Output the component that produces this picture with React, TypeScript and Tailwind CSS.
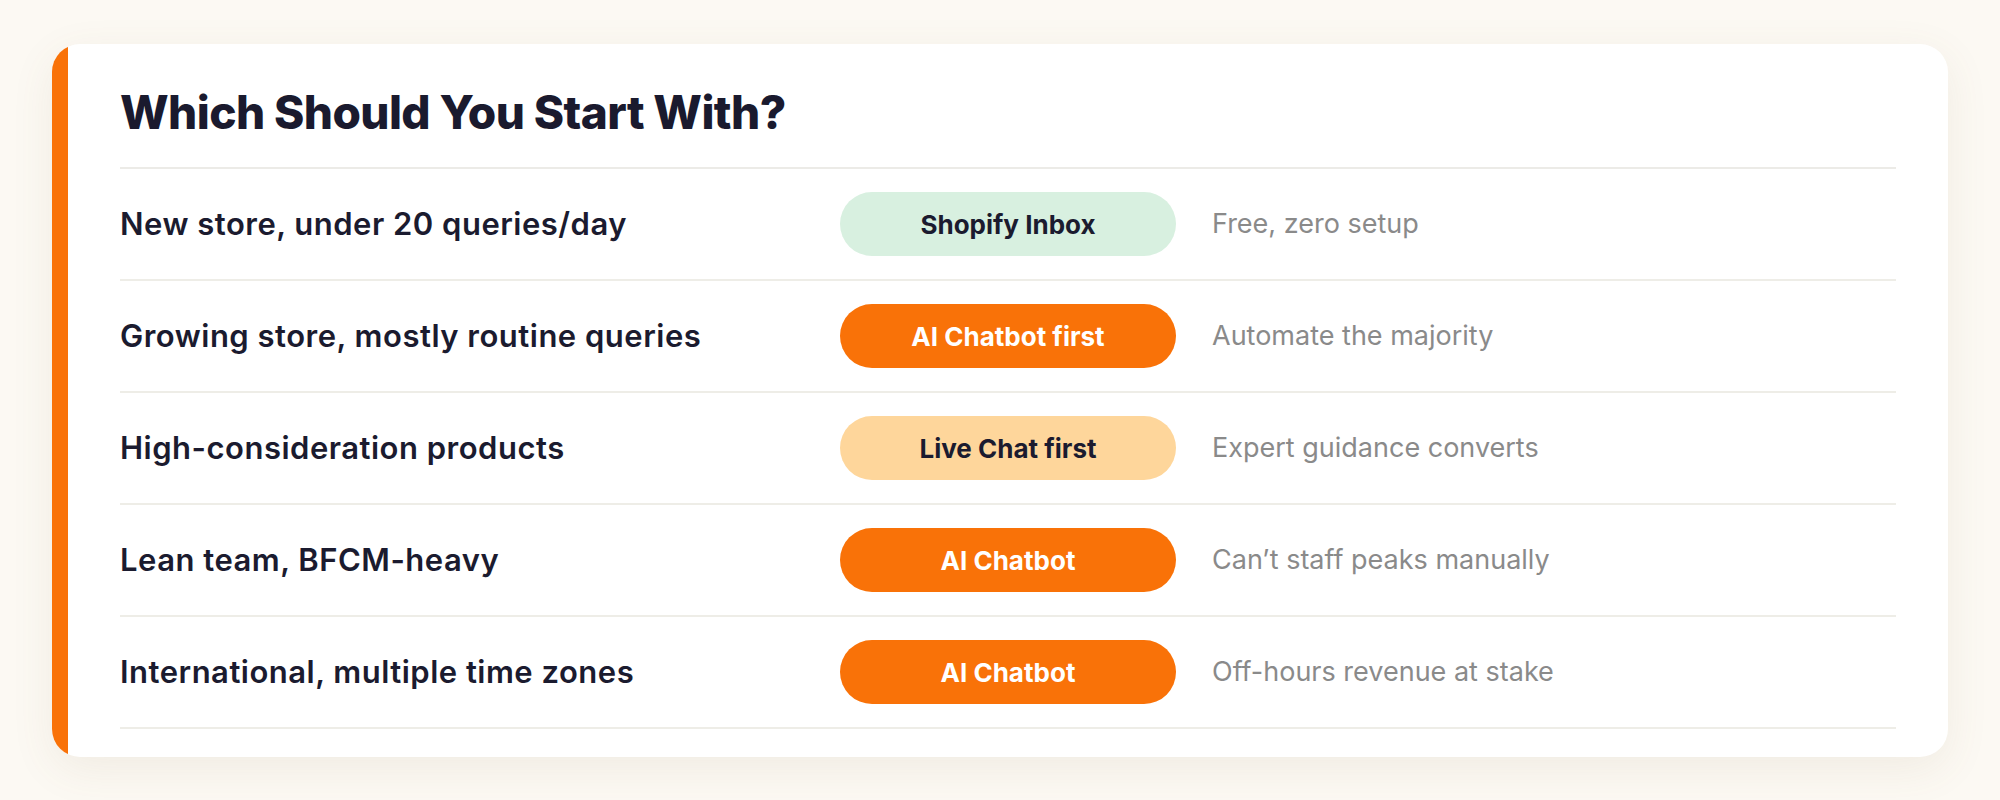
const rows = [
  { label: "New store, under 20 queries/day", pick: "Shopify Inbox", tone: "green", note: "Free, zero setup" },
  { label: "Growing store, mostly routine queries", pick: "AI Chatbot first", tone: "orange", note: "Automate the majority" },
  { label: "High-consideration products", pick: "Live Chat first", tone: "amber", note: "Expert guidance converts" },
  { label: "Lean team, BFCM-heavy", pick: "AI Chatbot", tone: "orange", note: "Can’t staff peaks manually" },
  { label: "International, multiple time zones", pick: "AI Chatbot", tone: "orange", note: "Off-hours revenue at stake" },
];

const pillTone: Record<string, string> = {
  green: "bg-[#d8f0e0] text-[#1b1b2f]",
  orange: "bg-[#f97208] text-white",
  amber: "bg-[#fed69b] text-[#1b1b2f]",
};

export default function App() {
  return (
    <div
      className="min-h-[800px] bg-[#fcf9f3] px-[52px] pt-[44px] pb-[44px]"
      style={{ fontFamily: "Inter, 'Noto Sans', sans-serif" }}
    >
      <div className="flex overflow-hidden rounded-[28px] bg-white shadow-[0_12px_44px_rgba(120,100,70,0.09)]">
        {/* accent stripe */}
        <div className="w-4 shrink-0 bg-[#f97208]" />

        <div className="flex-1 pl-[52px] pr-[52px] pt-[41px] pb-[28px]">
          <h2 className="border-b-2 border-[#ecebe7] pb-[27px] text-[46px] leading-[1.2] font-extrabold tracking-[-0.6px] text-[#1a1a2e]">
            Which Should You Start With?
          </h2>

          {rows.map((r) => (
            <div
              key={r.label}
              className="grid h-[112px] grid-cols-[684px_336px_1fr] items-center gap-x-9 border-b-2 border-[#eeede7]"
            >
              <div className="text-[31px] font-semibold tracking-[0.5px] text-[#1b1b2f]">{r.label}</div>
              <div
                className={`flex h-16 items-center justify-center rounded-full text-[26px] font-bold ${pillTone[r.tone]}`}
              >
                {r.pick}
              </div>
              <div className="text-[27px] text-[#8a8a8a]">{r.note}</div>
            </div>
          ))}
        </div>
      </div>
    </div>
  );
}
